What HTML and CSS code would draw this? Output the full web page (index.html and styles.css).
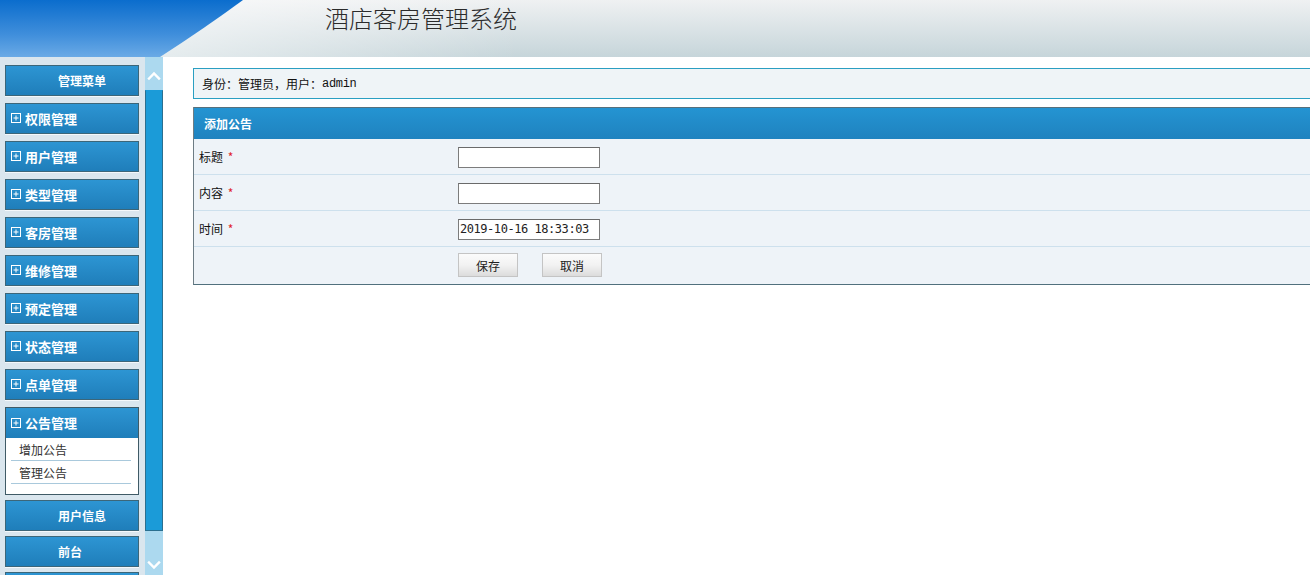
FILE: index.html
```html
<!DOCTYPE html>
<html lang="zh-CN">
<head>
<meta charset="utf-8">
<title>酒店客房管理系统</title>
<link rel="stylesheet" href="styles.css">
</head>
<body>
<header class="top">
  <svg class="top-bg" viewBox="0 0 1310 57" preserveAspectRatio="none" aria-hidden="true">
    <defs>
      <linearGradient id="gray" x1="0" y1="0" x2="0" y2="1">
        <stop offset="0" stop-color="#eff1f2"/>
        <stop offset="1" stop-color="#c6d5da"/>
      </linearGradient>
      <linearGradient id="glow" x1="0" y1="0" x2="1" y2="0">
        <stop offset="0" stop-color="#ffffff" stop-opacity="0.55"/>
        <stop offset="1" stop-color="#ffffff" stop-opacity="0"/>
      </linearGradient>
      <linearGradient id="blue" x1="0" y1="0" x2="0" y2="1">
        <stop offset="0" stop-color="#0b6dcd"/>
        <stop offset="0.6" stop-color="#3f8edb"/>
        <stop offset="1" stop-color="#6aaae6"/>
      </linearGradient>
    </defs>
    <rect x="0" y="0" width="1310" height="57" fill="url(#gray)"/>
    <rect x="160" y="0" width="360" height="57" fill="url(#glow)"/>
    <path d="M0 0 H243 Q205 28 160 57 H0 Z" fill="url(#blue)"/>
  </svg>
  <h1 class="site-title">酒店客房管理系统</h1>
</header>

<div class="layout">
  <aside class="sidebar">
    <div class="menu-title">管理菜单</div>
    <div class="menu-item"><svg class="plus" viewBox="0 0 10 10"><rect x="0.5" y="0.5" width="9" height="9"/><path d="M2.5 5H7.5M5 2.5V7.5"/></svg>权限管理</div>
    <div class="menu-item"><svg class="plus" viewBox="0 0 10 10"><rect x="0.5" y="0.5" width="9" height="9"/><path d="M2.5 5H7.5M5 2.5V7.5"/></svg>用户管理</div>
    <div class="menu-item"><svg class="plus" viewBox="0 0 10 10"><rect x="0.5" y="0.5" width="9" height="9"/><path d="M2.5 5H7.5M5 2.5V7.5"/></svg>类型管理</div>
    <div class="menu-item"><svg class="plus" viewBox="0 0 10 10"><rect x="0.5" y="0.5" width="9" height="9"/><path d="M2.5 5H7.5M5 2.5V7.5"/></svg>客房管理</div>
    <div class="menu-item"><svg class="plus" viewBox="0 0 10 10"><rect x="0.5" y="0.5" width="9" height="9"/><path d="M2.5 5H7.5M5 2.5V7.5"/></svg>维修管理</div>
    <div class="menu-item"><svg class="plus" viewBox="0 0 10 10"><rect x="0.5" y="0.5" width="9" height="9"/><path d="M2.5 5H7.5M5 2.5V7.5"/></svg>预定管理</div>
    <div class="menu-item"><svg class="plus" viewBox="0 0 10 10"><rect x="0.5" y="0.5" width="9" height="9"/><path d="M2.5 5H7.5M5 2.5V7.5"/></svg>状态管理</div>
    <div class="menu-item"><svg class="plus" viewBox="0 0 10 10"><rect x="0.5" y="0.5" width="9" height="9"/><path d="M2.5 5H7.5M5 2.5V7.5"/></svg>点单管理</div>
    <div class="menu-group">
      <div class="group-head"><svg class="plus" viewBox="0 0 10 10"><rect x="0.5" y="0.5" width="9" height="9"/><path d="M2.5 5H7.5M5 2.5V7.5"/></svg>公告管理</div>
      <ul class="submenu">
        <li>增加公告</li>
        <li>管理公告</li>
      </ul>
    </div>
    <div class="menu-title tight">用户信息</div>
    <div class="menu-title tight">前台</div>
    <div class="menu-title tight"></div>
  </aside>

  <div class="scrollbar">
    <div class="scroll-btn">
      <svg viewBox="0 0 14 10" class="chev"><path d="M2 7.5 L7 2.5 L12 7.5"/></svg>
    </div>
    <div class="scroll-thumb"></div>
    <div class="scroll-btn down">
      <svg viewBox="0 0 14 10" class="chev"><path d="M2 2.5 L7 7.5 L12 2.5"/></svg>
    </div>
  </div>

  <main class="content">
    <div class="identity">身份：管理员，用户：<span class="mono">admin</span></div>

    <section class="panel">
      <div class="panel-head">添加公告</div>
      <div class="form-row">
        <div class="label">标题 <span class="req">*</span></div>
        <div class="field"><input type="text" class="text-input"></div>
      </div>
      <div class="form-row">
        <div class="label">内容 <span class="req">*</span></div>
        <div class="field"><input type="text" class="text-input"></div>
      </div>
      <div class="form-row">
        <div class="label">时间 <span class="req">*</span></div>
        <div class="field"><input type="text" class="text-input date" value="2019-10-16 18:33:03"></div>
      </div>
      <div class="form-row last">
        <div class="label"></div>
        <div class="field buttons">
          <button class="btn">保存</button>
          <button class="btn">取消</button>
        </div>
      </div>
    </section>
  </main>
</div>
</body>
</html>
```

FILE: styles.css
```css
* { box-sizing: border-box; }

html, body {
  margin: 0;
  padding: 0;
  height: 575px;
  overflow: hidden;
  background: #ffffff;
  font-family: "Noto Sans CJK SC", "Liberation Sans", sans-serif;
  font-size: 12px;
  color: #222;
}

.top {
  position: relative;
  height: 57px;
  overflow: hidden;
}

.top-bg {
  position: absolute;
  left: 0;
  top: 0;
  width: 100%;
  height: 57px;
  display: block;
}

.site-title {
  position: relative;
  margin: 0;
  padding: 0 0 0 325px;
  font-size: 24px;
  line-height: 35px;
  font-weight: 300;
  color: #2b2b2b;
}

.layout {
  display: flex;
  height: 518px;
}

/* sidebar */
.sidebar {
  width: 145px;
  flex: none;
  background: #dae6ee;
  padding: 8px 0 0 5px;
  display: flex;
  flex-direction: column;
  gap: 7px;
  overflow: hidden;
}

.menu-title,
.menu-item {
  flex: none;
  width: 134px;
  height: 31px;
  border: 1px solid #3c6679;
  box-shadow: 0 1px 0 #f4f8fb;
  background: linear-gradient(#2d95d3, #1f7eba);
  color: #fff;
  font-weight: bold;
  font-size: 13px;
  display: flex;
  align-items: center;
  padding-bottom: 1px;
}

.menu-title {
  padding-left: 52px;
  font-size: 12px;
}

.menu-title.tight { margin-top: -2px; }

.menu-item { padding-left: 5px; }

.plus {
  width: 10px;
  height: 10px;
  margin-right: 4px;
  fill: none;
  stroke: #fff;
  stroke-width: 1;
  flex: none;
}

.menu-group {
  flex: none;
  width: 134px;
  border: 1px solid #3f5a66;
  background: #fff;
}

.group-head {
  height: 30px;
  background: linear-gradient(#2d95d3, #1f7eba);
  color: #fff;
  font-weight: bold;
  font-size: 13px;
  display: flex;
  align-items: center;
  padding-left: 5px;
  padding-bottom: 1px;
}

.submenu {
  list-style: none;
  margin: 0;
  padding: 0 7px 10px 5px;
}

.submenu li {
  height: 23px;
  line-height: 24px;
  padding-left: 8px;
  border-bottom: 1px solid #a9c9dc;
  color: #333;
  font-size: 12px;
}

/* scrollbar */
.scrollbar {
  width: 18px;
  flex: none;
  background: #acd9ef;
  display: flex;
  flex-direction: column;
  padding-top: 5px;
}

.scroll-btn {
  height: 28px;
  display: flex;
  align-items: center;
  justify-content: center;
  flex: none;
}

.scroll-btn.down {
  margin-top: auto;
  height: 44px;
  align-items: flex-end;
  padding-bottom: 5px;
}

.chev {
  width: 14px;
  height: 10px;
  fill: none;
  stroke: #fff;
  stroke-width: 2.4;
  stroke-linecap: square;
}

.scroll-thumb {
  height: 441px;
  flex: none;
  background: #1b9bd8;
  border: 1px solid #2b6f8f;
  border-top-color: #1b9bd8;
}

/* content */
.content {
  flex: 1;
  min-width: 0;
  padding: 11px 0 0 30px;
  overflow: hidden;
}

.identity {
  width: calc(100% + 20px);
  height: 31px;
  border: 1px solid #2a9fc2;
  border-right: none;
  background: #eff4f7;
  display: flex;
  align-items: center;
  padding-left: 8px;
  font-size: 12px;
  color: #111;
}

.mono {
  font-family: "Liberation Mono", "DejaVu Sans Mono", monospace;
  font-size: 12px;
  letter-spacing: -0.3px;
}

.panel {
  margin-top: 8px;
  width: calc(100% + 20px);
  border-left: 1px solid #6d7c84;
  border-bottom: 1px solid #51707d;
  background: #eef3f8;
}

.panel-head {
  height: 32px;
  border-top: 1px solid #57707c;
  background: linear-gradient(#2494d2, #1f82bf);
  color: #fff;
  font-weight: bold;
  font-size: 12px;
  display: flex;
  align-items: center;
  padding-left: 10px;
}

.form-row {
  display: flex;
  height: 36px;
  border-bottom: 1px solid #cde0ed;
  background: #eef3f8;
}

.form-row.last {
  height: 37px;
  border-bottom: none;
}

.label {
  width: 264px;
  flex: none;
  padding-left: 5px;
  display: flex;
  align-items: center;
  font-size: 12px;
  color: #111;
  white-space: pre;
}

.req {
  color: #e0242c;
  margin-left: 2px;
}

.field {
  display: flex;
  align-items: center;
}

.text-input {
  width: 142px;
  height: 21px;
  border: 1px solid #7c7c7c;
  border-top-color: #6a6a6a;
  background: #fff;
  padding: 0 1px;
  margin-top: 1px;
  font-size: 12px;
}

.text-input.date {
  font-family: "DejaVu Sans Mono", monospace;
  font-size: 12px;
  color: #222;
  letter-spacing: -0.45px;
}

.buttons {
  gap: 24px;
  padding-bottom: 1px;
}

.btn {
  width: 60px;
  height: 24px;
  border: 1px solid #c4c4c4;
  background: linear-gradient(#fbfbfb 0%, #f2f2f2 50%, #dcdcdc 100%);
  font-family: "Noto Sans CJK SC", sans-serif;
  font-size: 12px;
  color: #222;
  padding: 0;
}
```
